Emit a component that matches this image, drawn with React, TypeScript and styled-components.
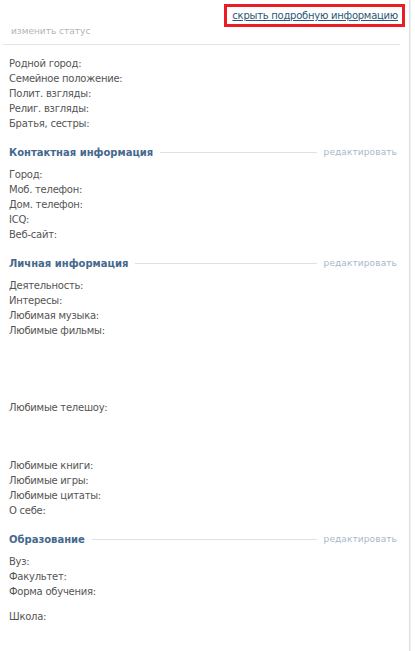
import { createGlobalStyle } from 'styled-components';
import styled from 'styled-components';

const GlobalStyle = createGlobalStyle`
  html, body {
    margin: 0;
    padding: 0;
    background: #ffffff;
  }
  body {
    font-family: 'DejaVu Sans', Tahoma, sans-serif;
    font-size: 10px;
    letter-spacing: -0.25px;
  }
`;

const SPage = styled.div`
  width: 410px;
  min-height: 651px;
  box-sizing: border-box;
  border-right: 1px solid #d8dfe6;
  box-shadow: 1px 0 0 #eef1f4;
  background: #ffffff;
`;

const STop = styled.div`
  display: flex;
  justify-content: flex-end;
  padding: 4px 4px 0 0;
`;

const SMarked = styled.div`
  border: 3px solid #ec1c24;
  padding: 0 4px 0 5px;
  line-height: 17px;
`;

const SLink = styled.a`
  color: #2b587a;
  text-decoration: underline;
  cursor: pointer;
`;

const SStatus = styled.div`
  padding: 0 0 0 11px;
  line-height: 14px;
  margin-top: -3px;
  color: #b4b4b4;
  font-size: 9px;
  letter-spacing: 0;
`;

const SDivider = styled.div`
  margin: 6px 9px 11px 3px;
  border-top: 1px solid #e4e4e4;
`;

const SSection = styled.div`
  padding: 0 12px 0 9px;
`;

const SHeading = styled.div`
  display: flex;
  align-items: center;
  gap: 7px;
  margin: 14px 0 7px;
  line-height: 15px;
`;

const STitle = styled.span`
  color: #45688e;
  font-weight: 700;
  letter-spacing: 0;
`;

const SRule = styled.span`
  flex: 1;
  height: 1px;
  background: #dae1e8;
`;

const SEdit = styled.a`
  color: #a8b8cb;
  font-size: 9px;
  letter-spacing: 0.1px;
  cursor: pointer;
`;

const SRow = styled.div<{ $tall?: number; $gap?: number }>`
  color: #555555;
  line-height: 15px;
  min-height: ${({ $tall }) => ($tall ? `${$tall}px` : '15px')};
  margin-top: ${({ $gap }) => ($gap ? `${$gap}px` : '0')};
`;

type Row = { label: string; tall?: number; gap?: number };

type Section = { title?: string; rows: Row[] };

const sections: Section[] = [
  {
    rows: [
      { label: 'Родной город:' },
      { label: 'Семейное положение:' },
      { label: 'Полит. взгляды:' },
      { label: 'Религ. взгляды:' },
      { label: 'Братья, сестры:' },
    ],
  },
  {
    title: 'Контактная информация',
    rows: [
      { label: 'Город:' },
      { label: 'Моб. телефон:' },
      { label: 'Дом. телефон:' },
      { label: 'ICQ:' },
      { label: 'Веб-сайт:' },
    ],
  },
  {
    title: 'Личная информация',
    rows: [
      { label: 'Деятельность:' },
      { label: 'Интересы:' },
      { label: 'Любимая музыка:' },
      { label: 'Любимые фильмы:', tall: 77 },
      { label: 'Любимые телешоу:', tall: 58 },
      { label: 'Любимые книги:' },
      { label: 'Любимые игры:' },
      { label: 'Любимые цитаты:' },
      { label: 'О себе:' },
    ],
  },
  {
    title: 'Образование',
    rows: [
      { label: 'Вуз:' },
      { label: 'Факультет:' },
      { label: 'Форма обучения:' },
      { label: 'Школа:', gap: 10 },
    ],
  },
];

const App = () => {
  return (
    <>
      <GlobalStyle />
      <SPage>
        <STop>
          <SMarked>
            <SLink>скрыть подробную информацию</SLink>
          </SMarked>
        </STop>
        <SStatus>изменить статус</SStatus>
        <SDivider />
        {sections.map((section, i) => (
          <SSection key={i}>
            {section.title && (
              <SHeading>
                <STitle>{section.title}</STitle>
                <SRule />
                <SEdit>редактировать</SEdit>
              </SHeading>
            )}
            {section.rows.map((row) => (
              <SRow key={row.label} $tall={row.tall} $gap={row.gap}>
                {row.label}
              </SRow>
            ))}
          </SSection>
        ))}
      </SPage>
    </>
  );
};

export default App;
